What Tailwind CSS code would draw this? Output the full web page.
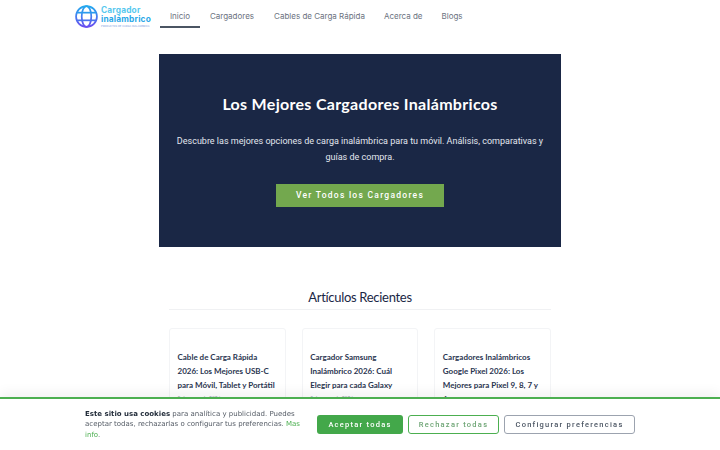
<!DOCTYPE html>
<html lang="es">
<head>
    <meta charset="UTF-8">
    <meta name="viewport" content="width=device-width, initial-scale=1.0">
    <title>Cargador Inalámbrico</title>
    <script src="https://cdn.jsdelivr.net/npm/@tailwindcss/browser@4"></script>
</head>
<body class="bg-white h-[450px] overflow-hidden font-['Inter',sans-serif]">
    <header class="h-[54px] pl-[75px] flex items-start">
        <a href="#" class="flex items-start gap-[3px] pt-[5px] w-[85px] shrink-0">
            <svg class="w-[23px] h-[23px] shrink-0" viewBox="0 0 24 24" fill="none" stroke="url(#globe)" stroke-width="1.8">
                <defs>
                    <linearGradient id="globe" x1="0" y1="0" x2="0" y2="1" gradientUnits="objectBoundingBox">
                        <stop offset="0" stop-color="#22a9ee"/>
                        <stop offset="1" stop-color="#6a4df0"/>
                    </linearGradient>
                </defs>
                <circle cx="12" cy="12" r="10.9"/>
                <ellipse cx="12" cy="12" rx="5" ry="10.9"/>
                <path d="M2 8h20" stroke="#2b9bee"/>
                <path d="M2 16h20" stroke="#4a73ee"/>
            </svg>
            <div class="flex flex-col">
                <span class="font-bold text-[8.3px] leading-[9px] text-[#57c8ee] tracking-[0.2px] mt-[1px]">Cargador</span>
                <span class="font-bold text-[8.3px] leading-[9px] text-[#2aa8e8] tracking-[0.2px]">inalámbrico</span>
                <span class="text-[2.6px] leading-[5px] text-[#7f9fe0] whitespace-nowrap">PRODUCTOS DE CARGA INALÁMBRICA</span>
            </div>
        </a>
        <nav class="flex text-[8px] text-[#6b7280] leading-[11px]">
            <a href="#" class="w-[40px] h-[28px] pt-[11px] text-center border-b-2 border-[#4b5563]">Inicio</a>
            <a href="#" class="ml-[10px] pt-[11px]">Cargadores</a>
            <a href="#" class="ml-[20px] pt-[11px]">Cables de Carga Rápida</a>
            <a href="#" class="ml-[19px] pt-[11px]">Acerca de</a>
            <a href="#" class="ml-[19px] pt-[11px]">Blogs</a>
        </nav>
    </header>

    <main class="w-[402px] mx-auto">
        <section class="h-[193px] bg-[#1a2745] flex flex-col items-center text-center pt-[39px]">
            <h1 class="font-['Lato',sans-serif] font-bold text-[16px] leading-[22px] text-white tracking-[0.3px]">Los Mejores Cargadores Inalámbricos</h1>
            <p class="mt-[18px] font-['Roboto',sans-serif] text-[9px] leading-[16px] text-[#e2e6ee] w-[375px]">Descubre las mejores opciones de carga inalámbrica para tu móvil. Análisis, comparativas y guías de compra.</p>
            <a href="#" class="mt-[19px] w-[168px] h-[23px] bg-[#73a84e] flex items-center justify-center font-['Roboto',sans-serif] font-medium text-[8.5px] tracking-[1.27px] text-white">Ver Todos los Cargadores</a>
        </section>

        <section class="px-[10px] pt-[42px]">
            <div class="border-b border-[#f0f1f3] h-[21px]">
                <h2 class="font-['Lato',sans-serif] text-[13px] tracking-[-0.3px] leading-[17px] text-center text-[#1a2745]">Artículos Recientes</h2>
            </div>
            <div class="grid grid-cols-3 gap-[16px] mt-[18px]">
                <article class="h-[140px] border border-[#f3f4f6] rounded-[3px] px-[7.5px] pt-[21px] font-['Lato',sans-serif] font-bold text-[8px] leading-[14px] text-[#2a3550]">
                    <h3>Cable de Carga Rápida 2026: Los Mejores USB-C para Móvil, Tablet y Portátil</h3>
                    <p class="font-normal text-[5px] leading-[12px] text-[#9ca3af]">5 de enero de 2026</p>
                </article>
                <article class="h-[140px] border border-[#f3f4f6] rounded-[3px] px-[7.5px] pt-[21px] font-['Lato',sans-serif] font-bold text-[8px] leading-[14px] text-[#2a3550]">
                    <h3>Cargador Samsung Inalámbrico 2026: Cuál Elegir para cada Galaxy</h3>
                    <p class="font-normal text-[5px] leading-[12px] text-[#9ca3af]">5 de enero de 2026</p>
                </article>
                <article class="h-[140px] border border-[#f3f4f6] rounded-[3px] px-[7.5px] pt-[21px] font-['Lato',sans-serif] font-bold text-[8px] leading-[14px] text-[#2a3550]">
                    <h3>Cargadores Inalámbricos Google Pixel 2026: Los Mejores para Pixel 9, 8, 7 y 6</h3>
                </article>
            </div>
        </section>
    </main>

    <div class="fixed inset-x-0 bottom-0 h-[53px] bg-white border-t-2 border-[#4caf50] shadow-[0_-4px_12px_rgba(0,0,0,0.06)] flex items-center pl-[85px]">
        <p class="w-[216px] font-['DejaVu_Sans',sans-serif] text-[7px] leading-[10.5px] text-[#555c66]"><strong class="text-[#1f2937]">Este sitio usa cookies</strong> para analítica y publicidad. Puedes aceptar todas, rechazarlas o configurar tus preferencias. <a href="#" class="text-[#4caf50]">Mas info</a>.</p>
        <div class="ml-[16px] flex gap-[5px] font-['Roboto',sans-serif] font-medium text-[7.5px] tracking-[1.25px]">
            <button class="w-[86px] h-[19px] rounded-[3px] bg-[#43a84a] text-white">Aceptar todas</button>
            <button class="w-[91px] h-[19px] rounded-[3px] border border-[#4caf50] bg-white text-[#6ea575]">Rechazar todas</button>
            <button class="w-[131px] h-[19px] rounded-[3px] border border-[#9ca3af] bg-white text-[#4b5563]">Configurar preferencias</button>
        </div>
    </div>
</body>
</html>
